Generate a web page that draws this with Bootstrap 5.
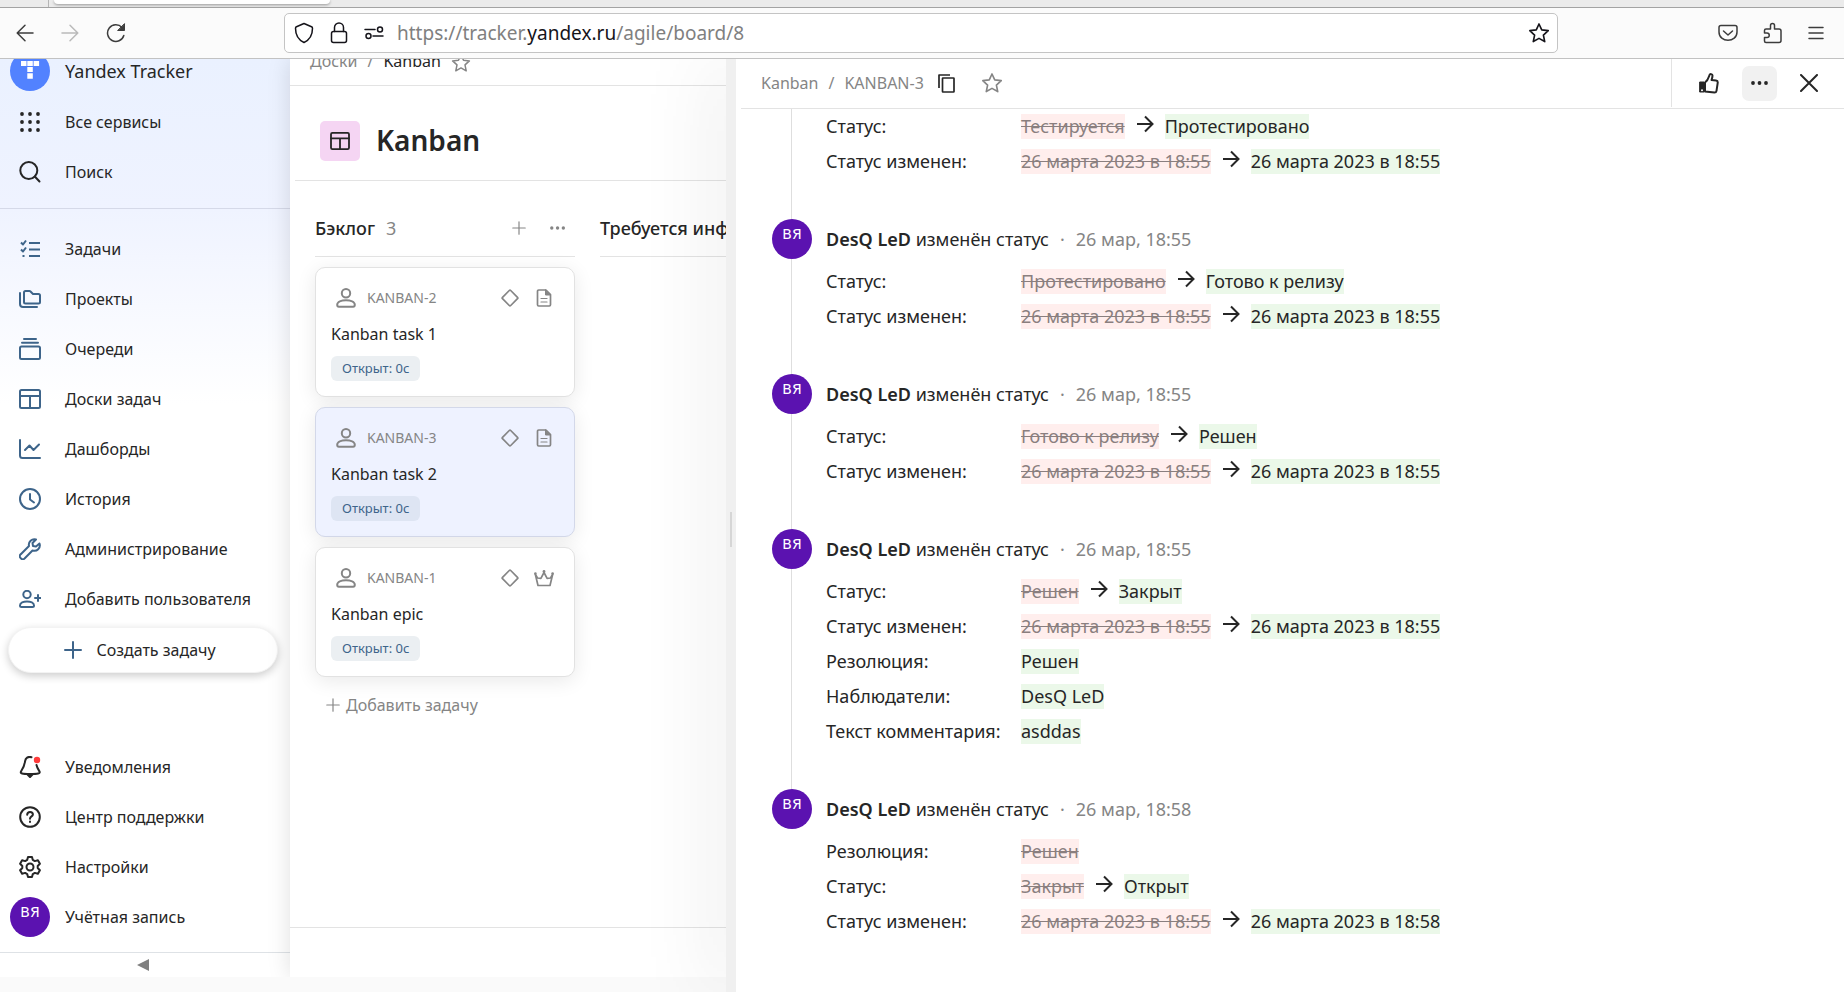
<!DOCTYPE html>
<html lang="ru">
<head>
<meta charset="utf-8">
<meta name="viewport" content="width=device-width, initial-scale=1">
<title>KANBAN-3 — Yandex Tracker</title>
<link rel="stylesheet" href="https://cdn.jsdelivr.net/npm/bootstrap@5.3.0/dist/css/bootstrap.min.css">
<style>
:root{--ink:#262626;--muted:#858585;--line:#e3e3e3;--steel:#3d648a;--violet:#5b12b0}
body{font-family:"Noto Sans","Open Sans",sans-serif;font-size:16px;line-height:24px;color:var(--ink);background:#fafafa}
a{color:inherit;text-decoration:none}
button{color:inherit}
svg{display:block;flex:none;fill:none;stroke:currentColor;stroke-width:2;stroke-linecap:round;stroke-linejoin:round}
svg.fine{stroke-width:1.5}
svg.solid{stroke:none}
.plain{background:none;border:0;padding:0}
.muted{color:var(--muted)}
.ink{color:var(--ink)}

/* browser window */
.tabstrip{height:8px;background:#ebebeb;border-bottom:1px solid #a3a3a3;padding-left:48px;overflow:hidden}
.tab-edge{border-left:1px solid #b5b5b5;width:6px}
.tab-active{width:276px;height:4px;background:#fff;border-radius:0 0 4px 4px;box-shadow:0 1px 3px rgba(0,0,0,.35)}
.toolbar{height:51px;background:#fbfbfb;border-bottom:1px solid #c2c2c2;color:#3c3c3c;padding:0 16px 1px}
.nav-buttons{width:268px;gap:27px}
.off{color:#bababa}
.address{height:40px;width:1274px;flex:0 1 auto;background:#fff;border:1px solid #c4c4c4;border-radius:5px;padding:0 7px;color:#15141a;gap:11px}
.url{font-size:19px;color:#808080;white-space:nowrap;outline:0}
.url b{font-weight:400;color:#15141a}

/* left menu */
.side{width:290px;flex:none;margin-bottom:15px;background:#fff linear-gradient(#eaf1ff 0,#eff3ff 150px,#fff 345px);overflow:hidden}
.side-head{margin-top:-12px;border-bottom:1px solid #d5d9e8;padding-bottom:11px;margin-bottom:15px}
.side-link{display:flex;align-items:center;height:50px;padding-left:10px;width:100%;text-align:left}
.side-ico{width:40px;margin-right:15px;flex:none;display:flex;justify-content:center}
.steel{color:var(--steel)}
.side-brand{font-size:18px;line-height:22px;padding-bottom:2px}
.create{height:46px;margin:3px 12px 0 8px;padding:0 6px 0 0;background:#fff;border:1px solid #f3f3f3;border-radius:23px;box-shadow:0 3px 8px rgba(0,0,0,.2);gap:14px}
.collapse-bar{height:25px;border-top:1px solid #dcdcdc;margin-top:10px;padding-right:4px}
.collapse-bar svg{fill:#808080}
.face{width:40px;height:40px;border-radius:50%;background:var(--violet);color:#fff;font:14px/31px "DejaVu Sans",sans-serif;text-align:center;flex:none}

/* board */
.board{width:436px;flex:none;margin-bottom:15px;background:#fff;box-shadow:0 0 22px rgba(0,0,0,.13);clip-path:inset(0 0 0 -30px);z-index:1}
.board-clip{overflow:hidden}
.board-crumbs{height:27px;border-bottom:1px solid var(--line);padding-left:20px;align-items:flex-end;gap:10px}
.board-crumbs>*{margin-bottom:12px}
.board-title{height:95px;margin-left:5px;padding:15px 0 0 25px;border-bottom:1px solid var(--line);gap:16px}
.board-title h1{font-size:28px;line-height:38px;font-weight:600;margin:0;padding-bottom:2px}
.board-ico{width:40px;height:40px;border-radius:5px;background:#f5d5f3}
.columns{padding:20px 0 0 25px;gap:25px;flex:1}
.column-box{width:260px;flex:none}
.column-head{height:56px;border-bottom:1px solid var(--line);padding:0 9px 2px 0;font-size:18px;white-space:nowrap}
.column-head h2{font-size:18px;line-height:24px;font-weight:500;margin:0 11px 0 0}
.tasks{padding-top:10px;gap:10px}
.task{height:130px;border:1px solid #e2e2e2;border-radius:10px;background:#fff;padding:15px;box-shadow:0 4px 20px rgba(0,0,0,.09)}
.task.active{background:#eef2ff;border-color:#d3d8e9}
.task-top{height:30px;font-size:14px;color:var(--muted);padding:0 5px;gap:11px}
.task-name{line-height:24px;margin-top:9px}
.state{display:inline-block;font-size:13px;line-height:25px;border-radius:6px;background:#ebeff2;color:var(--steel);padding:0 11px;margin-top:10px}
.active .state{background:#dee5f3}
.add-task{margin:16px 0 0 11px;color:var(--muted);gap:6px}
.board-foot{height:50px;border-top:1px solid var(--line)}

/* splitter and issue panel */
.splitter{width:10px;flex:none;background:#f0f0f0;box-shadow:0 0 76px rgba(0,0,0,.3);z-index:2;padding-top:8px}
.grip{width:2px;height:35px;background:#d6d6d6}
.issue{background:#fff;z-index:3;padding-left:5px;min-width:0}
.issue-head{height:50px;border-bottom:1px solid var(--line);padding:0 0 1px 20px;gap:10px}
.issue-tools{border-left:1px solid var(--line);width:173px;padding:0 26px 0 27px}
.more{width:35px;height:35px;border-radius:7px;background:#f1f1f1}
.log{font-size:18px;line-height:25px}
.entry{display:flex;padding-left:31px}
.rail{width:40px;margin-right:14px;flex:none;display:flex;flex-direction:column;align-items:center}
.rail::after{content:"";flex:1;width:1px;background:#dedede;margin-right:2px}
.entry:last-child .rail::after{display:none}
.entry-body{padding-bottom:40px}
.entry-head{height:40px;display:flex;align-items:center;margin-bottom:5px;white-space:pre}
.entry-head b{font-weight:600}
.entry-dot{margin:0 11px}
.entry th{width:195px;font-weight:400;padding:0;height:35px}
.entry td{padding:0;height:35px}
.was{background:#ffeeed;color:#8a7f7f;text-decoration:line-through}
.now{background:#ebf8e9}
.change{display:flex;align-items:center;gap:11px}
.change svg{margin-bottom:5px}
</style>
<script src="https://cdn.jsdelivr.net/npm/bootstrap@5.3.0/dist/js/bootstrap.bundle.min.js"></script>
</head>
<body class="vh-100 d-flex flex-column overflow-hidden">
<svg class="d-none">
  <symbol id="star" viewBox="0 0 20 20"><path d="M10 1.800l2.500 5.400 5.900.7-4.400 4 1.200 5.900-5.200-2.900-5.200 2.900L6 11.900 1.600 7.900l5.900-.7z"/></symbol>
  <symbol id="board" viewBox="0 0 22 20"><rect x="1" y="1" width="20" height="18" rx="1.500"/><path d="M1 7h20M11 7v12"/></symbol>
  <symbol id="plus" viewBox="0 0 18 18"><path d="M9 1v16M1 9h16"/></symbol>
  <symbol id="dots" viewBox="0 0 18 4"><g fill="currentColor" stroke="none"><circle cx="2" cy="2" r="1.900"/><circle cx="8.500" cy="2" r="1.900"/><circle cx="15" cy="2" r="1.900"/></g></symbol>
  <symbol id="person" viewBox="0 0 20 20"><circle cx="10" cy="5.300" r="4.200"/><path d="M1.200 16.800c0-6.200 17.600-6.200 17.600 0 0 1.300-.6 2-1.700 2H2.900c-1.100 0-1.700-.7-1.700-2z"/></symbol>
  <symbol id="diamond" viewBox="0 0 18 18"><rect x="3.200" y="3.200" width="11.600" height="11.600" rx="1" stroke-width="1.700" transform="rotate(45 9 9)"/></symbol>
  <symbol id="doc" viewBox="0 0 15 18"><path d="M9.500 1H2.200Q1 1 1 2.200v13.600Q1 17 2.200 17h10.600q1.200 0 1.200-1.200V5.500z" stroke-width="1.700"/><path d="M9 1v5h5z" fill="currentColor" stroke-width="1"/><path d="M4.500 9.500h6M4.500 13h6" stroke-width="1.200"/></symbol>
  <symbol id="crown" viewBox="0 0 20 17"><path d="M1.300 4.300L4 15.500h12l2.700-11.200-2.200 3.700-3.400.3L10 2.500 6.900 8.300l-3.400-.3z" stroke-width="1.700"/><g fill="currentColor" stroke="none"><circle cx="1.400" cy="3.600" r="1.300"/><circle cx="10" cy="1.500" r="1.400"/><circle cx="18.600" cy="3.600" r="1.300"/></g></symbol>
  <symbol id="arrow" viewBox="0 0 18 18"><path d="M1 9h15.500M9 1.500L16.500 9 9 16.500" stroke-linecap="butt" stroke-linejoin="miter"/></symbol>
</svg>

<div class="tabstrip d-flex"><span class="tab-edge"></span><span class="tab-active"></span></div>
<header class="toolbar d-flex align-items-center">
  <div class="nav-buttons d-flex align-items-center">
    <button class="plain" aria-label="Назад"><svg class="fine" width="18" height="18" viewBox="0 0 18 18"><path d="M17 9H1.500M9 1.200L1.200 9 9 16.800"/></svg></button>
    <button class="plain off" aria-label="Вперёд"><svg class="fine" width="18" height="18" viewBox="0 0 18 18"><path d="M1 9h15.500M9 1.200L16.800 9 9 16.800"/></svg></button>
    <button class="plain" aria-label="Обновить"><svg class="fine" width="20" height="20" viewBox="0 0 20 20"><path d="M17.800 12.500A8.300 8.300 0 1 1 16 4.500"/><path d="M18.500 1v6.500H12z" fill="currentColor" stroke-width="1"/></svg></button>
  </div>
  <div class="address d-flex align-items-center">
    <svg class="fine" width="24" height="24" viewBox="0 0 24 24"><path d="M12 2.500l7.500 3.300c.7.300 1 .8 1 1.500C20.500 14 17.500 19 12 21.500 6.500 19 3.500 14 3.500 7.300c0-.7.300-1.200 1-1.500z"/></svg>
    <svg class="fine" width="24" height="24" viewBox="0 0 24 24"><rect x="4.500" y="10.500" width="15" height="11" rx="2"/><path d="M7.500 10.500V6.500a4.500 4.500 0 0 1 9 0v4"/></svg>
    <svg class="fine" width="24" height="24" viewBox="0 0 24 24"><path d="M3 8.500h10M11 15h10"/><circle cx="18" cy="8.500" r="2.500"/><circle cx="6.500" cy="15" r="2.500"/></svg>
    <div class="url flex-grow-1" role="textbox" contenteditable="true" spellcheck="false" aria-label="Адрес">https://tracker.<b>yandex.ru</b>/agile/board/8</div>
    <button class="plain" aria-label="В закладки"><svg class="fine" width="22" height="22"><use href="#star"/></svg></button>
  </div>
  <div class="d-flex align-items-center ms-auto gap-4">
    <button class="plain" aria-label="Pocket"><svg class="fine" width="20" height="20" viewBox="0 0 20 20"><path d="M3 2.500h14q2 0 2 2V9c0 11-18 11-18 0V4.500q0-2 2-2z"/><path d="M5.500 8L10 12l4.500-4"/></svg></button>
    <button class="plain" aria-label="Расширения"><svg class="fine" width="22" height="22" viewBox="0 0 22 22"><path d="M4 7h4.500V3.500a2 2 0 0 1 4 0V7H17q2 0 2 2v9.500q0 2-2 2H4q-1.500 0-1.500-1.500v-3.500H5a2.200 2.200 0 0 0 0-4.500H2.500V8.500Q2.500 7 4 7z"/></svg></button>
    <button class="plain me-1" aria-label="Меню"><svg class="fine" width="16" height="14" viewBox="0 0 16 14"><path d="M1 1.500h14M1 7h14M1 12.500h14"/></svg></button>
  </div>
</header>

<div class="d-flex flex-grow-1 overflow-hidden">
  <nav class="side d-flex flex-column">
    <div class="side-head">
      <a href="#" class="side-link side-brand"><span class="side-ico"><svg class="solid" width="40" height="40" viewBox="0 0 40 40"><circle cx="20" cy="20" r="20" fill="#5282ff"/><path d="M11 10h5.500v5H11zM17.300 10h5.500v5h-5.500zM23.600 10h5.500v5h-5.500zM17.300 16h5.500v5h-5.500zM17.300 22.300h5.500v5.500h-5.500z" fill="#fff"/></svg></span>Yandex Tracker</a>
      <a href="#" class="side-link"><span class="side-ico"><svg class="solid" width="20" height="20" viewBox="0 0 20 20"><g fill="currentColor"><circle cx="2" cy="2" r="1.900"/><circle cx="10" cy="2" r="1.900"/><circle cx="18" cy="2" r="1.900"/><circle cx="2" cy="10" r="1.900"/><circle cx="10" cy="10" r="1.900"/><circle cx="18" cy="10" r="1.900"/><circle cx="2" cy="18" r="1.900"/><circle cx="10" cy="18" r="1.900"/><circle cx="18" cy="18" r="1.900"/></g></svg></span>Все сервисы</a>
      <a href="#" class="side-link"><span class="side-ico"><svg width="22" height="22" viewBox="0 0 22 22"><circle cx="9.800" cy="9.500" r="8.500"/><path d="M15.800 15.500l4.700 5"/></svg></span>Поиск</a>
    </div>
    <a href="#" class="side-link"><span class="side-ico steel"><svg width="22" height="20" viewBox="0 0 22 20"><path d="M2 3.500l2 2 3-4M2 10.500l2 2 3-4M10 4h11M10 10.500h11M10 17h11M3.500 17h2" stroke-linecap="butt"/></svg></span>Задачи</a>
    <a href="#" class="side-link"><span class="side-ico steel"><svg width="22" height="18" viewBox="0 0 22 18"><path d="M5 3v9q0 1.500 1.500 1.500h13q1.500 0 1.500-1.500V5.500Q21 4 19.500 4H14l-2.500-2.500Q11 1 10.500 1h-4Q5 1 5 2.500z"/><path d="M1 3v11q0 3 3 3h14"/></svg></span>Проекты</a>
    <a href="#" class="side-link"><span class="side-ico steel"><svg width="22" height="22" viewBox="0 0 22 22"><rect x="1" y="8.500" width="20" height="12.500" rx="1.500"/><path d="M3 4.700h16M5 1h12"/></svg></span>Очереди</a>
    <a href="#" class="side-link"><span class="side-ico steel"><svg width="22" height="20"><use href="#board"/></svg></span>Доски задач</a>
    <a href="#" class="side-link"><span class="side-ico steel"><svg width="22" height="20" viewBox="0 0 22 20"><path d="M1 1v15.500Q1 19 3.500 19H21M6 11l4.500-4.500L14.500 11 20 5.500"/></svg></span>Дашборды</a>
    <a href="#" class="side-link"><span class="side-ico steel"><svg width="22" height="22" viewBox="0 0 22 22"><circle cx="11" cy="11" r="10"/><path d="M11 6v5.500l4 3"/></svg></span>История</a>
    <a href="#" class="side-link"><span class="side-ico steel"><svg width="22" height="22" viewBox="0 0 22 22"><path d="M17 1.500a5.500 5.500 0 0 0-7 6.500L1.800 16.200a2.400 2.400 0 0 0 0 4 2.400 2.400 0 0 0 4 0L13.500 12.500a5.500 5.500 0 0 0 7-7L17 8.500l-3-.5-.5-3z"/></svg></span>Администрирование</a>
    <a href="#" class="side-link"><span class="side-ico steel"><svg width="22" height="18" viewBox="0 0 22 18"><circle cx="8" cy="4.500" r="3.700"/><path d="M1 15.500c0-5.500 14-5.500 14 0q0 1.500-1.500 1.500h-11Q1 17 1 15.500zM19 5v6M16 8h6"/></svg></span>Добавить пользователя</a>
    <button class="create d-flex align-items-center justify-content-center"><svg class="steel" width="18" height="18"><use href="#plus"/></svg>Создать задачу</button>
    <div class="mt-auto">
      <a href="#" class="side-link"><span class="side-ico"><svg width="22" height="22" viewBox="0 0 22 22"><path d="M12.500 1.200C9 .2 6.500 2 6 5.500 5.500 10 4 12.500 2 15.500c-1 2 1 2.500 9 2.500s10.500-.5 9.500-2.500c-1.500-2.500-2.500-4-3-6.500"/><path d="M8.500 18.500h5L11 21z" fill="currentColor"/><circle cx="18" cy="4" r="3.200" fill="#ff3b3b" stroke="none"/></svg></span>Уведомления</a>
      <a href="#" class="side-link"><span class="side-ico"><svg width="22" height="22" viewBox="0 0 22 22"><circle cx="11" cy="11" r="9.800"/><path d="M8.200 8.700c.2-3.700 5.700-3.400 5.700-.2 0 1.900-2.900 2-2.900 4.200M11 15.600v.3"/></svg></span>Центр поддержки</a>
      <a href="#" class="side-link"><span class="side-ico"><svg width="22" height="22" viewBox="0 0 22 22"><circle cx="11" cy="11" r="3.500"/><path d="M9 1h4l.8 2.900 2 1.200 3.100-.8 2 3.400L18.700 10v2l2.200 2.300-2 3.400-3.100-.8-2 1.200L13 21H9l-.8-2.900-2-1.200-3.100.8-2-3.400L3.300 12v-2L1.100 7.700l2-3.400 3.100.8 2-1.200z"/></svg></span>Настройки</a>
      <a href="#" class="side-link"><span class="side-ico"><span class="face">ВЯ</span></span>Учётная запись</a>
      <button class="plain collapse-bar w-100 d-flex align-items-center justify-content-center border-top" aria-label="Свернуть меню"><svg class="solid" width="12" height="12" viewBox="0 0 12 12"><path d="M12 0v12L0 6z"/></svg></button>
    </div>
  </nav>

  <main class="board d-flex">
    <div class="board-clip d-flex flex-column w-100">
      <div class="board-crumbs d-flex">
        <a href="#" class="muted">Доски</a><span class="muted">/</span><a href="#">Kanban</a>
        <button class="plain muted" aria-label="В избранное"><svg class="fine" width="20" height="20"><use href="#star"/></svg></button>
      </div>
      <div class="board-title d-flex align-items-center">
        <span class="board-ico d-flex align-items-center justify-content-center"><svg width="20" height="18"><use href="#board"/></svg></span>
        <h1>Kanban</h1>
      </div>
      <div class="columns d-flex">
        <section class="column-box">
          <div class="column-head d-flex align-items-center">
            <h2>Бэклог</h2><span class="muted">3</span>
            <button class="plain muted ms-auto" aria-label="Добавить"><svg class="fine" width="14" height="14"><use href="#plus"/></svg></button>
            <button class="plain muted ms-4" aria-label="Ещё"><svg width="16" height="4"><use href="#dots"/></svg></button>
          </div>
          <div class="tasks d-flex flex-column">
            <article class="task">
              <div class="task-top d-flex align-items-center"><svg width="20" height="20"><use href="#person"/></svg><span>KANBAN-2</span><svg class="ms-auto" width="18" height="18"><use href="#diamond"/></svg><svg class="ms-1" width="20" height="18"><use href="#doc"/></svg></div>
              <div class="task-name"><a href="#">Kanban task 1</a></div><span class="state">Открыт: 0с</span>
            </article>
            <article class="task active">
              <div class="task-top d-flex align-items-center"><svg width="20" height="20"><use href="#person"/></svg><span>KANBAN-3</span><svg class="ms-auto" width="18" height="18"><use href="#diamond"/></svg><svg class="ms-1" width="20" height="18"><use href="#doc"/></svg></div>
              <div class="task-name"><a href="#">Kanban task 2</a></div><span class="state">Открыт: 0с</span>
            </article>
            <article class="task">
              <div class="task-top d-flex align-items-center"><svg width="20" height="20"><use href="#person"/></svg><span>KANBAN-1</span><svg class="ms-auto" width="18" height="18"><use href="#diamond"/></svg><svg class="ms-1" width="20" height="17"><use href="#crown"/></svg></div>
              <div class="task-name"><a href="#">Kanban epic</a></div><span class="state">Открыт: 0с</span>
            </article>
          </div>
          <button class="plain add-task d-flex align-items-center"><svg class="fine" width="14" height="14"><use href="#plus"/></svg>Добавить задачу</button>
        </section>
        <section class="column-box">
          <div class="column-head d-flex align-items-center"><h2>Требуется информация</h2></div>
        </section>
      </div>
      <div class="board-foot"></div>
    </div>
  </main>

  <div class="splitter d-flex align-items-center justify-content-center"><span class="grip"></span></div>

  <aside class="issue d-flex flex-column flex-grow-1">
    <div class="issue-head d-flex align-items-center muted">
      <a href="#">Kanban</a><span>/</span><a href="#">KANBAN-3</a>
      <button class="plain ink ms-1" aria-label="Копировать"><svg width="17" height="19" viewBox="0 0 17 19"><rect x="4.500" y="4" width="11.500" height="14" rx=".5" stroke-width="1.700"/><path d="M1 14V1h11" stroke-linecap="butt" stroke-width="1.700"/></svg></button>
      <button class="plain ms-3" aria-label="В избранное"><svg class="fine" width="22" height="22"><use href="#star"/></svg></button>
      <div class="issue-tools d-flex align-items-center justify-content-between ms-auto h-100 ink">
        <button class="plain" aria-label="Нравится"><svg width="20" height="21" viewBox="0 0 20 21"><path d="M6 18.500V9.500c3-2 3.500-4.500 4.500-7.500.5-1.500 3-1 3 .5 0 2-.5 3-1 4.500l4.500.5q2 .3 1.700 2.300l-1.200 8q-.3 1.700-2 1.700z"/><path d="M1 9h4v10H1z" fill="currentColor" stroke-width="1"/><circle cx="3" cy="17.300" r="1" fill="#fff" stroke="none"/></svg></button>
        <button class="plain more d-flex align-items-center justify-content-center" aria-label="Действия"><svg width="18" height="4"><use href="#dots"/></svg></button>
        <button class="plain" aria-label="Закрыть"><svg width="18" height="18" viewBox="0 0 18 18"><path d="M1 1l16 16M17 1L1 17"/></svg></button>
      </div>
    </div>
    <div class="log" id="log"></div>
  </aside>
</div>

<script>
// History of the issue: [time, [[field, old value, new value], ...]]
const day = '26 марта 2023 в ';
const changes = [
  [null, [['Статус', 'Тестируется', 'Протестировано'], ['Статус изменен', day + '18:55', day + '18:55']]],
  ['18:55', [['Статус', 'Протестировано', 'Готово к релизу'], ['Статус изменен', day + '18:55', day + '18:55']]],
  ['18:55', [['Статус', 'Готово к релизу', 'Решен'], ['Статус изменен', day + '18:55', day + '18:55']]],
  ['18:55', [['Статус', 'Решен', 'Закрыт'], ['Статус изменен', day + '18:55', day + '18:55'], ['Резолюция', '', 'Решен'], ['Наблюдатели', '', 'DesQ LeD'], ['Текст комментария', '', 'asddas']]],
  ['18:58', [['Резолюция', 'Решен', ''], ['Статус', 'Закрыт', 'Открыт'], ['Статус изменен', day + '18:55', day + '18:58']]]
];
const row = ([field, was, now]) => `<tr><th scope="row">${field}:</th><td><div class="change">` +
  (was ? `<del class="was">${was}</del>` : '') +
  (was && now ? '<svg width="18" height="18"><use href="#arrow"/></svg>' : '') +
  (now ? `<ins class="now text-decoration-none">${now}</ins>` : '') + '</div></td></tr>';
document.getElementById('log').innerHTML = changes.map(([time, rows]) =>
  `<article class="entry"><div class="rail">${time ? '<span class="face">ВЯ</span>' : ''}</div><div class="entry-body">` +
  (time ? `<div class="entry-head"><b>DesQ LeD</b> изменён статус<span class="muted entry-dot">·</span><time class="muted">26 мар, ${time}</time></div>` : '') +
  `<table>${rows.map(row).join('')}</table></div></article>`).join('');
</script>
</body>
</html>
